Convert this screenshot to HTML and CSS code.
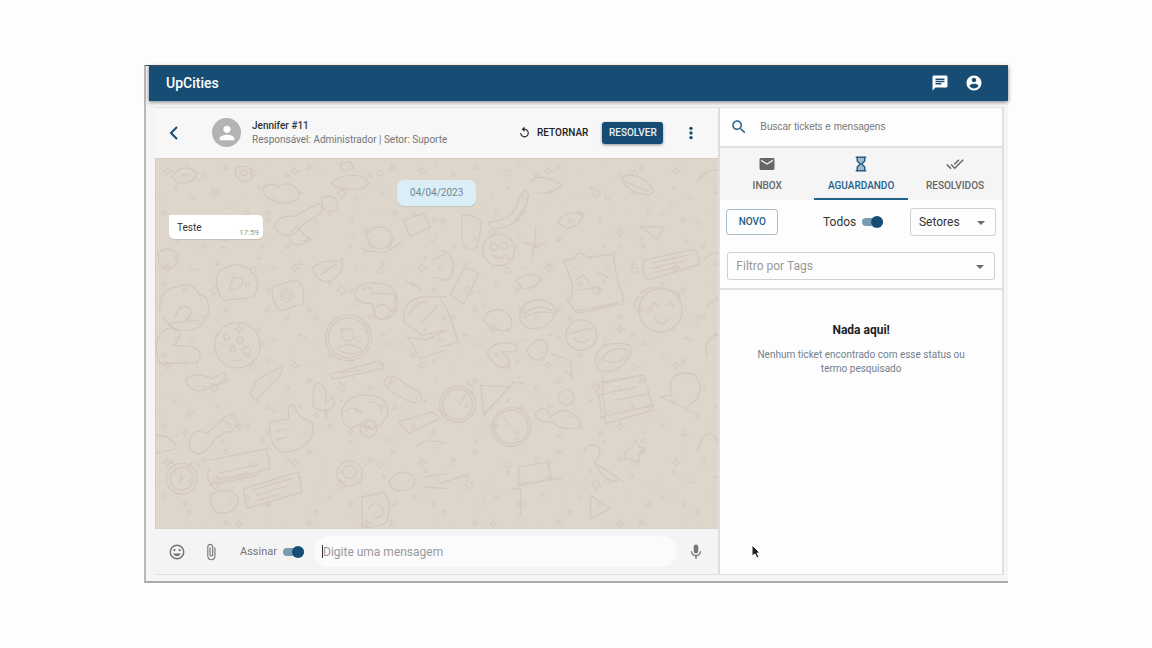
FILE: index.html
```html
<!DOCTYPE html>
<html lang="pt-BR">
<head>
    <meta charset="UTF-8">
    <meta name="viewport" content="width=device-width, initial-scale=1">
    <title>UpCities</title>
    <link rel="stylesheet" href="styles.css">
</head>
<body>
    <div class="window">
        <header class="topbar">
            <h1>UpCities</h1>
            <button type="button" class="icon-btn" aria-label="Chat">
                <svg width="18" height="18" viewBox="0 0 24 24"><path d="M20 2H4c-1.1 0-2 .9-2 2v18l4-4h14c1.100 0 2-.9 2-2V4c0-1.100-.9-2-2-2zM6 9h12v2H6V9zm8 5H6v-2h8v2zm4-6H6V6h12v2z"/></svg>
            </button>
            <button type="button" class="icon-btn" aria-label="Conta">
                <svg width="18" height="18" viewBox="0 0 24 24"><path d="M12 2C6.480 2 2 6.480 2 12s4.480 10 10 10 10-4.480 10-10S17.520 2 12 2zm0 3c1.660 0 3 1.340 3 3s-1.340 3-3 3-3-1.340-3-3 1.340-3 3-3zm0 14.200c-2.500 0-4.710-1.280-6-3.220.03-1.990 4-3.080 6-3.080 1.990 0 5.970 1.090 6 3.080-1.290 1.940-3.500 3.220-6 3.220z"/></svg>
            </button>
        </header>

        <main class="content">
            <section class="chat">
                <div class="chat-header">
                    <button type="button" class="icon-btn back" aria-label="Voltar">
                        <svg width="18" height="18" viewBox="0 0 18 18"><path class="line" d="M12 3 6 9l6 6"/></svg>
                    </button>
                    <span class="avatar">
                        <svg width="22" height="22" viewBox="0 0 24 24"><path d="M12 12c2.210 0 4-1.790 4-4s-1.790-4-4-4-4 1.790-4 4 1.790 4 4 4zm0 2c-2.670 0-8 1.340-8 4v2h16v-2c0-2.660-5.330-4-8-4z"/></svg>
                    </span>
                    <div class="contact">
                        <h2>Jennifer #11</h2>
                        <p>Responsável: Administrador | Setor: Suporte</p>
                    </div>
                    <button type="button" class="btn btn-text">
                        <svg width="13" height="13" viewBox="0 0 24 24"><path d="M12 5V1L7 6l5 5V7c3.310 0 6 2.690 6 6s-2.690 6-6 6-6-2.690-6-6H4c0 4.420 3.580 8 8 8s8-3.580 8-8-3.580-8-8-8z"/></svg>
                        RETORNAR
                    </button>
                    <button type="button" class="btn btn-primary">RESOLVER</button>
                    <button type="button" class="icon-btn more" aria-label="Mais opções">
                        <svg width="16" height="16" viewBox="0 0 24 24"><circle cx="12" cy="5" r="2.500"/><circle cx="12" cy="12" r="2.500"/><circle cx="12" cy="19" r="2.500"/></svg>
                    </button>
                </div>

                <div class="messages">
                    <svg class="wallpaper" viewBox="0 0 565 371" preserveAspectRatio="xMinYMin slice" aria-hidden="true">
                        <defs>
                            <pattern id="bits" width="83" height="71" patternUnits="userSpaceOnUse">
                                <path d="M31 5l2 3M49 15a2 2 0 1 0 .1 0M70 7l4 3-5 2zM19 31l3-3m-3 0 3 3M40 39a3 2 0 1 1-4-2M62 32v5m-3-2h6M77 44l2 2M9 53a2 2 0 1 0 .1 0M28 60l3-1 1 3-3 2zM73 63l3-2M3 38l3 1M43 24l2-2M54 52l2 2"/>
                            </pattern>
                            <pattern id="stars" width="127" height="97" patternUnits="userSpaceOnUse">
                                <path d="m12 9 2 3 3 1-3 1-2 3-1-3-3-1 3-1zM58 30l2 3 3-1-1 3 2 2-3 1-2 2-1-3-3-1 2-2zM98 12a3 3 0 1 0 .1 0M34 61a2 2 0 1 0 .1 0M84 70l1 3 3 1-3 1-1 4-1-4-3-1 3-1zM112 52l3 2-2 3-3-1zM20 84l3-2 1 3M66 88l3 2m-3 0 3-2M107 86a2 2 0 1 0 .1 0M41 14l3 2M76 49l-3 2M7 44l1 3"/>
                            </pattern>
                        </defs>
                        <rect width="565" height="371" fill="url(#bits)"/>
                        <rect width="565" height="371" fill="url(#stars)"/>
                        <!-- top left doodles -->
                        <g transform="translate(-15 -98) scale(.3333)">
                            <path d="M95 350q30-40 65-20 20 20-10 35-40 10-45-5zm25 0q15-15 30 0M285 325q30-15 50 5 10 30-20 35-30-5-30-40m12 12q18-15 25 0-5 20-25 0M365 390q20-30 50-10 30-20 55 5 20 30-15 40-60 15-90-35zM400 500q20-40 60-30l75-40q20 10 5 30l-60 40q-20 40-60 20zM570 370q50-35 95-20 40 20 0 35-60 10-95-15M545 415q20-15 40 0 20 40-15 40-30-5-25-40M680 515q40-30 70 0 20 40-20 50-50 5-50-50M790 480l60-20 20 40-60 30zM470 500q-30 20-20 45 30 20 60-5zM600 310l30-5 10 20-35 10z"/>
                        </g>
                        <!-- left side doodles -->
                        <g transform="translate(0 82) scale(.3333)">
                            <circle cx="247" cy="315" r="68"/><circle cx="255" cy="300" r="9"/><circle cx="215" cy="290" r="9"/><circle cx="232" cy="327" r="8"/><circle cx="275" cy="332" r="12"/>
                            <path d="m235 362 25-2M15 205q-5-60 55-65 40-20 65 25 30 0 25 55-20 50-60 50-55 5-75-40m35 0q15-40 40-30 20 20-10 40m-50 10 90-10M190 150q-20-50 20-65 40-25 75 5 40 35 10 80-40 10-65 5-30 20-40-25m40-20q0-25 15-15 25-10 15 20l-20 15q-25-5-10-20M350 140l70-20q30 0 25 70l-60 20q-30 5-35-70"/>
                            <circle cx="395" cy="165" r="19"/><circle cx="395" cy="165" r="9"/>
                            <path d="M470 85q30-30 90-20 10 35-40 60-35 0-50-40m25 20 50-35M600 150q30-30 60-20 60-5 65 50 0 40-20 50-20 15-45 0l-10-40q-60 0-50-40m20 0q30-20 30 10l50 0q30 0 15 30"/>
                            <circle cx="680" cy="215" r="22"/><circle cx="580" cy="293" r="69"/><circle cx="580" cy="293" r="60"/><circle cx="577" cy="284" r="19"/>
                            <path d="M545 325q40-25 75 5-30 25-75-5M525 402l140-38q25 0 20 20l-135 30q-25 5-25-12m35-4 60-10M685 430q10-30 35-20l70 45q20 25-5 32-25 5-90-45zm25-15-12 25M745 245q-5-65 55-75l75 0m0 100-75 15-55-40m10 40 40 70 75-25M755 290l55 10 65-30m-115-40q15-45 55-45m-20 65 50-50M10 290q25-40 60-20 15 20-15 45l60 5q35 20 10 48l-110 2q-20-40-5-80M90 420q30-30 80-5l40-20q10 30-35 40-60 40-85-15M285 460l20-40 80-45-10 30-75 75zM475 480q-5-60 20-50 25 10 15 60l25-20q10 35-20 40l0 25-5-25q-45 0-35-30M560 520q5-50 60-55 60-5 75 30 10 30-15 55l-30 15q-50-20-60 0-35-15-30-45m10-5q20-25 50 5m20-35q35 0 40 30M640 540a25 25 0 1 0 1 0m-5 20q15 15 25-5M345 545l55-10 0-40 15 0 20 35 40 20-5 40q-30 45-90 47-40-20-35-92m15 30 35-10m-35 35 35-10M105 600q10-40 50-20l55-50q30-20 35 20-10 30-35 25l-30 20q-30 50-55 45-30-10-20-40m90-55q20-10 35 20M160 660l175-35 10 60-180 47q-15-35 0-45m25 12 120-27m-120 45 90-20m-95 35 130-30M265 745l165-50 10 60-165 50zm25 5 125-37m-115 53 100-30m-95 45 70-20"/>
                            <circle cx="80" cy="715" r="46"/><circle cx="80" cy="715" r="34"/><path d="m80 690-8 35 15-15M165 785q0-35 45-35 40 5 40 35-20 45-70 30zM45 660l15 15m55-10-20 15"/>
                            <circle cx="583" cy="700" r="38"/><circle cx="583" cy="695" r="20"/><path d="M700 725q30-45 75-20 15 45-35 45-30 5-40-25M805 710l70-10m-70 40 70 5M620 770l65-15 20 40-10 50q-35 20-75 15zm20 35q20-30 45 0-5 35-30 25M730 545l100-30q40 20 0 30l-70 35zM785 620q25-30 85-10M0 585q55 0 65 40L0 640M10 40q20-25 60 0 5 40-30 45-35-10-30-45M620 25q30 15 75 10l45-30M750 125q40 5 50 30M830 60l45-20m-40 70 40 10"/>
                        </g>
                        <!-- right side doodles -->
                        <g transform="translate(285 2) scale(.3333)">
                            <path d="M270 65q30-30 95 10-25 25-75 25M545 50q60-20 95 45l-15 10q-70-5-80-55m10 15 70 30M350 185q20-35 80-25-10 40-50 45zM145 185q80 0 90-75l20-20 10 15q-20 90-90 100-35 0-30-20M65 165q30-5 60 20l-15 75q-30 20-45-10zM600 200l70 0-20 40-10-10z"/>
                            <circle cx="175" cy="270" r="47"/><circle cx="160" cy="260" r="10"/><circle cx="190" cy="257" r="12"/><path d="M155 285q25 20 45-5M285 200l0 60 35-15M245 245l35 10-5 50M610 300l145-32q20 0 20 45l-145 45q-30 0-20-58m20 10 110-25m-110 40 110-25m-105 38 80-18M370 300l35-5q0-20 20-15l15 12 80-10q0 60 30 130l-5 20-135 28-30-40q30-10 5-80zm35 153 130-25M405 360l25-15 20 30m20-40 30 15-15 20m-75 20 70-10"/>
                            <circle cx="660" cy="450" r="65"/><path d="M600 410q-20 0-18 35l20 10M600 400q30-35 115 0l5 25m-90 15q10-20 25 0m20 0q10-20 25 0m-60 30q25 40 50 0M225 360q40-30 80-5-20 35-60 30zM30 405l45-85 40 20-45 90zM130 480q15-40 55-30 45 25 20 60-45 10-75-30M240 460q10-45 70-40 50 20 30 50-20 40-75 35-35-20-25-45m5 10q40-50 95-15m-90 20q40-30 90-15"/>
                            <circle cx="422" cy="525" r="46"/><path d="m385 520 60-15m-45 30q25 25 45 0M465 595q10-45 60-45 60-5 45 35-30 50-80 50-30-10-25-40m20 0q15-30 60-30 40 10 5 30-30 25-65 0M140 575q25-35 75-25 35 15 0 25l-30 0 20 20 0 25q-45 10-65-45M260 570q30-50 60-20 5 35-20 50-35 0-40-30m70 10 60 20 5 50-20-20"/>
                            <path d="M485 670l120-25m-135 60 120-25m-110 90 160-35m-115-15 100-20M485 665l10 125 145-40-30-105zM475 700l10 80M690 665q20-40 75-20 25 40 5 70l-35 30-75-35 30-5z"/>
                            <circle cx="52" cy="732" r="54"/><circle cx="52" cy="732" r="45"/><path d="m80 700-25 35"/><circle cx="213" cy="800" r="50"/><circle cx="213" cy="800" r="58"/><path d="m190 770 20 30M120 670l10 90 80-80-90-5m10 90 90-100 30 5M285 760q25-35 45 10 60-50 95 30-60 15-90-15-50 5-50-25"/><circle cx="378" cy="712" r="23"/>
                            <path d="M430 880q10-40 45-20 10 30-15 45l90 60M460 900q20 60 75 65M235 920l85-15 15 50-100 22zM230 975l135-22M210 985l30 0 0 80M450 1005l60 40-60 30zM770 870q30-90 65-20M550 880l25-20 10-20 10 20 20 5-20 20 0 20-20-10-20 5zM0 970l85-30M0 560l55-15-25-75M0 420q25 20 50 120M0 270q40 5 40 50-10 50-40 40M800 440l45-40m-45 190q-20-50 45-75M775 60q20-40 70-25M790 300q20-30 50-20"/>
                        </g>
                    </svg>
                    <time class="date">04/04/2023</time>
                    <div class="bubble">
                        <p>Teste</p>
                        <time>17:59</time>
                    </div>
                </div>

                <form class="composer">
                    <button type="button" class="icon-btn" aria-label="Emoji">
                        <svg width="18" height="18" viewBox="0 0 24 24"><circle class="line" cx="12" cy="12" r="9"/><circle cx="8.500" cy="9.500" r="1.500"/><circle cx="15.500" cy="9.500" r="1.500"/><path d="M12 17.500c2.300 0 4.300-1.500 5.100-3.500H6.900c.8 2 2.800 3.500 5.100 3.500z"/></svg>
                    </button>
                    <button type="button" class="icon-btn" aria-label="Anexar">
                        <svg width="18" height="18" viewBox="0 0 24 24"><path d="M16.500 6v11.500c0 2.210-1.790 4-4 4s-4-1.790-4-4V5c0-1.380 1.120-2.500 2.500-2.500s2.500 1.120 2.500 2.500v10.500c0 .55-.45 1-1 1s-1-.45-1-1V6H10v9.500c0 1.380 1.120 2.500 2.500 2.500s2.500-1.120 2.500-2.500V5c0-2.210-1.790-4-4-4S7 2.790 7 5v12.500c0 3.040 2.460 5.500 5.500 5.500s5.500-2.460 5.500-5.500V6h-1.500z"/></svg>
                    </button>
                    <label class="toggle">Assinar <input type="checkbox" checked></label>
                    <div class="message-box">
                        <span class="caret"></span>
                        <input type="text" placeholder="Digite uma mensagem" aria-label="Mensagem">
                    </div>
                    <button type="button" class="icon-btn" aria-label="Gravar áudio">
                        <svg width="18" height="18" viewBox="0 0 24 24"><path d="M12 14c1.660 0 3-1.340 3-3V5c0-1.660-1.340-3-3-3S9 3.340 9 5v6c0 1.660 1.340 3 3 3zm5.300-3c0 3-2.540 5.100-5.300 5.100S6.700 14 6.700 11H5c0 3.410 2.720 6.230 6 6.720V21h2v-3.280c3.280-.48 6-3.300 6-6.720h-1.700z"/></svg>
                    </button>
                </form>
            </section>

            <aside class="tickets">
                <label class="search">
                    <svg width="18" height="18" viewBox="0 0 24 24"><path d="M15.500 14h-.79l-.28-.27C15.410 12.590 16 11.110 16 9.500 16 5.910 13.090 3 9.500 3S3 5.910 3 9.500 5.910 16 9.500 16c1.610 0 3.090-.59 4.230-1.570l.27.28v.79l5 4.990L20.490 19l-4.990-5zm-6 0C7.010 14 5 11.990 5 9.500S7.010 5 9.500 5 14 7.010 14 9.500 11.990 14 9.500 14z"/></svg>
                    <input type="search" placeholder="Buscar tickets e mensagens" aria-label="Buscar tickets e mensagens">
                </label>

                <nav class="tabs">
                    <button type="button">
                        <svg width="18" height="18" viewBox="0 0 24 24"><path d="M20 4H4c-1.100 0-1.990.9-1.990 2L2 18c0 1.100.9 2 2 2h16c1.100 0 2-.9 2-2V6c0-1.100-.9-2-2-2zm0 4-8 5-8-5V6l8 5 8-5v2z"/></svg>
                        INBOX
                    </button>
                    <button type="button" class="active">
                        <svg width="18" height="18" viewBox="0 0 24 24"><path class="glass" d="M7 3h10v5l-4 4 4 4v5H7v-5l4-4-4-4z"/><path class="line" d="M5 3h14M5 21h14M7 3v5l4 4-4 4v5M17 3v5l-4 4 4 4v5"/></svg>
                        AGUARDANDO
                    </button>
                    <button type="button">
                        <svg width="18" height="18" viewBox="0 0 24 24"><path d="m18 7-1.410-1.410-6.340 6.340 1.410 1.410L18 7zm4.240-1.410L11.660 16.170 7.480 12l-1.410 1.410L11.660 19l12-12-1.420-1.410zM.41 13.410 6 19l1.410-1.410L1.830 12 .41 13.410z"/></svg>
                        RESOLVIDOS
                    </button>
                </nav>

                <div class="filters">
                    <div class="filter-row">
                        <button type="button" class="btn btn-outline">NOVO</button>
                        <label class="toggle">Todos <input type="checkbox" checked></label>
                        <div class="field sectors">
                            <select aria-label="Setores">
                                <option>Setores</option>
                            </select>
                        </div>
                    </div>
                    <div class="field tags">
                        <input type="text" placeholder="Filtro por Tags" aria-label="Filtro por Tags">
                    </div>
                </div>

                <div class="empty">
                    <h3>Nada aqui!</h3>
                    <p>Nenhum ticket encontrado com esse status ou termo pesquisado</p>
                </div>
                <svg class="pointer" width="10" height="15" viewBox="0 0 10 15" aria-hidden="true"><path d="M1 1v11l3-2 2 4 2-1-2-4h3z"/></svg>
            </aside>
        </main>
    </div>
</body>
</html>
```
FILE: styles.css
```css
* {
    box-sizing: border-box;
}
body {
    margin: 0;
    padding: 10vh 12.5%;
    min-height: 100vh;
    background: #fdfdfd;
    color: #333;
    font-family: Roboto, Arial, sans-serif;
    font-size: 10px;
}
h1, h2, h3, p {
    margin: 0;
}
button, input, select {
    font-family: inherit;
    font-size: inherit;
    color: inherit;
}
button {
    padding: 0;
    border: none;
    background: none;
}
input, select {
    min-width: 0;
    border: none;
    outline: none;
    background: none;
}
svg {
    fill: currentColor;
    flex-shrink: 0;
}
.line {
    fill: none;
    stroke: currentColor;
    stroke-width: 2;
}

/* window frame */
.window {
    display: flex;
    flex-direction: column;
    min-height: 80vh;
    padding-left: 3px;
    border-top: 1px solid #4c5257;
    border-left: 2px solid #b9b9b9;
    border-bottom: 2px solid #acacac;
    background: #f5f5f5;
}
.topbar {
    display: flex;
    align-items: center;
    gap: 16px;
    height: 35px;
    padding: 0 25px 0 17px;
    background: #174d74;
    color: #fff;
    box-shadow: 0 1px 4px rgba(0, 0, 0, 0.5);
}
.topbar h1 {
    flex: 1;
    font-size: 14px;
    font-weight: 500;
}
.icon-btn {
    display: flex;
    align-items: center;
    justify-content: center;
    width: 18px;
    height: 18px;
}
.content {
    flex: 1;
    display: grid;
    grid-template-columns: 2fr 1fr;
    margin: 6px 4px 6px 6px;
    border: 1px solid #e0e0e0;
    border-left: none;
}

/* conversation */
.chat {
    display: flex;
    flex-direction: column;
    min-width: 0;
    border-right: 2px solid #dedede;
}
.chat-header {
    display: flex;
    align-items: center;
    height: 50px;
    padding: 0 18px 0 10px;
    background: #f7f7f7;
}
.back, .more {
    color: #174d74;
}
.avatar {
    display: flex;
    align-items: center;
    justify-content: center;
    width: 29px;
    height: 29px;
    margin: 0 11px 0 29px;
    border-radius: 50%;
    background: #b3b3b3;
    color: #fff;
}
.contact {
    flex: 1;
    line-height: 14px;
}
.contact h2 {
    font-size: 10px;
    font-weight: 500;
}
.contact p {
    color: #757575;
}
.btn {
    display: flex;
    align-items: center;
    justify-content: center;
    gap: 6px;
    border-radius: 3px;
    font-weight: 500;
}
.btn-text {
    color: #222;
}
.btn-primary {
    width: 61px;
    height: 22px;
    margin: 0 19px 0 14px;
    background: #174d74;
    color: #e8eef2;
    box-shadow: 0 1px 3px rgba(0, 0, 0, 0.4);
}
.messages {
    position: relative;
    flex: 1;
    display: flex;
    flex-direction: column;
    align-items: flex-start;
    gap: 9px;
    padding: 22px 14px;
    overflow: hidden;
    background: #dfd6cb;
}
.wallpaper {
    position: absolute;
    inset: 0;
    width: 100%;
    height: 100%;
    fill: none;
    stroke: #d3c9be;
    stroke-width: 1;
}
.wallpaper g {
    stroke-width: 4;
}
.date {
    position: relative;
    align-self: center;
    padding: 6px 13px;
    border-radius: 7px;
    background: #daeef8;
    color: #748590;
    line-height: 14px;
    box-shadow: 0 1px 1px #c2c2bf;
}
.bubble {
    position: relative;
    display: flex;
    justify-content: space-between;
    width: 94px;
    height: 24px;
    padding: 6px 4px 0 8px;
    border-radius: 0 5px 5px 5px;
    background: #fff;
    box-shadow: 0 1px 1px #c3bdb5;
    line-height: 14px;
}
.bubble time {
    align-self: flex-end;
    color: #999;
    font-size: 8px;
    line-height: 12px;
}
.composer {
    display: flex;
    align-items: center;
    height: 45px;
    gap: 10px;
    padding: 0 13px;
    background: #f4f4f4;
    color: #757575;
}
.composer .icon-btn + .icon-btn {
    margin: 0 8px 0 6px;
}
.toggle {
    display: flex;
    align-items: center;
    gap: 6px;
    font-size: 12px;
}
.composer .toggle {
    font-size: 11px;
}
.toggle input {
    appearance: none;
    display: flex;
    align-items: center;
    justify-content: flex-end;
    width: 21px;
    height: 8px;
    margin: 0;
    border-radius: 4px;
    background: #789bb1;
}
.toggle input::before {
    content: "";
    width: 12px;
    height: 12px;
    flex-shrink: 0;
    border-radius: 50%;
    background: #174d74;
}
.composer .toggle {
    margin-left: 2px;
}
.message-box {
    position: relative;
    flex: 1;
    display: flex;
    height: 31px;
    border-radius: 16px;
    background: #fbfbfb;
}
.message-box input {
    flex: 1;
    padding: 0 9px;
    font-size: 12px;
}
::placeholder {
    color: #999;
    opacity: 1;
}
.caret {
    position: absolute;
    top: 9px;
    left: 8px;
    width: 1px;
    height: 13px;
    background: #333;
}

/* ticket list */
.tickets {
    position: relative;
    min-width: 0;
    border-right: 1px solid #e0e0e0;
    background: #fdfdfd;
}
.search {
    display: flex;
    align-items: center;
    gap: 12px;
    height: 40px;
    padding: 0 10px;
    border-bottom: 2px solid #e0e0e0;
    color: #2a6289;
}
.search input {
    flex: 1;
    padding: 0;
    font-family: "Liberation Sans", Arial, sans-serif;
}
.search ::placeholder {
    color: #757575;
}
.tabs {
    display: grid;
    grid-template-columns: repeat(3, 1fr);
    height: 52px;
    background: #f5f5f5;
}
.tabs button {
    display: flex;
    flex-direction: column;
    align-items: center;
    gap: 6px;
    padding-top: 7px;
    border-bottom: 2px solid transparent;
    color: #666;
    font-weight: 500;
    line-height: 13px;
}
.tabs .active {
    border-color: #24608a;
    color: #24608a;
}
.glass {
    fill: #a3bbc9;
}
.filters {
    padding: 8px 6px;
    border-bottom: 2px solid #e0e0e0;
}
.filter-row {
    display: flex;
    align-items: center;
    justify-content: space-between;
    margin-bottom: 16px;
}
.btn-outline {
    width: 52px;
    height: 26px;
    border: 1px solid #a9bfce;
    color: #24608a;
}
.filters .toggle {
    margin-left: 18px;
}
.field {
    position: relative;
    display: flex;
    height: 28px;
    border: 1px solid #cfcfcf;
    border-radius: 3px;
}
.field::after {
    content: "";
    position: absolute;
    top: 12px;
    right: 10px;
    border: 4px solid transparent;
    border-top-color: #6b6b6b;
    border-bottom: none;
}
.field select, .field input {
    appearance: none;
    flex: 1;
    padding: 0 8px;
    font-size: 12px;
}
.sectors {
    width: 86px;
}
.tags {
    margin: 0 1px;
}
.empty {
    padding: 32px 28px;
    text-align: center;
}
.empty h3 {
    margin-bottom: 10px;
    color: #222;
    font-size: 12px;
    line-height: 16px;
}
.empty p {
    color: #71808d;
    line-height: 14px;
}
.pointer {
    position: absolute;
    bottom: 15px;
    left: 31px;
    fill: #222;
    stroke: #fff;
}
```
